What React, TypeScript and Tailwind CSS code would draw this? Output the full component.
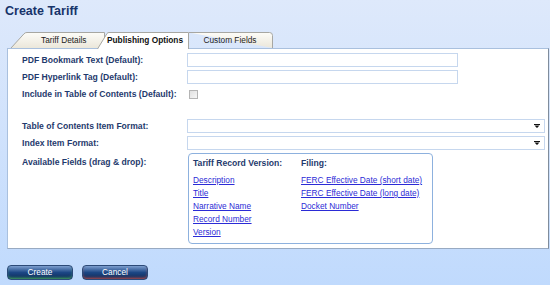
import React from "react";

const labelCls = "text-[8.6px] font-bold text-[#1f3a6d] leading-[14px] whitespace-nowrap";

function TextBox({ width }: { width: string }) {
  return <div className={`h-[14px] ${width} border border-[#c6d7ee] bg-white`} />;
}

function SelectBox() {
  return (
    <div className="h-[14px] w-[358px] border border-[#c6d7ee] bg-white flex items-center justify-end pr-[4px]">
      <svg width="6" height="4" viewBox="0 0 6 4">
        <path d="M0 0H6V1H0Z M0.5 1.5H5.5L3 4Z" fill="#111" />
      </svg>
    </div>
  );
}

function Tabs() {
  return (
    <div className="h-[16px] pl-[10px] flex items-start">
      <div className="relative w-[95px] h-[16px]">
        <svg className="absolute inset-0" width="95" height="16" viewBox="0 0 95 16">
          <defs>
            <linearGradient id="tg" x1="0" y1="0" x2="0" y2="1">
              <stop offset="0" stopColor="#fdfcf8" />
              <stop offset="1" stopColor="#ebe7da" />
            </linearGradient>
          </defs>
          <path d="M1 16 L14 1.8 Q15 0.5 17 0.5 L94.5 0.5 L94.5 16" fill="url(#tg)" stroke="#a7a7a2" />
        </svg>
        <span className="relative block pl-[31px] text-[8.3px] text-[#222] leading-[16px]">Tariff Details</span>
      </div>
      <div className="relative z-10 -ml-[8px] w-[92px] h-[17px]">
        <svg className="absolute inset-0" width="92" height="17" viewBox="0 0 92 17">
          <path d="M0.5 17 L10 1.5 Q10.7 0.5 12 0.5 L91.5 0.5 L91.5 17" fill="#fff" stroke="#a7a7a2" />
        </svg>
        <span className="relative block pl-[10px] text-[8.3px] font-bold text-[#111] leading-[16px] whitespace-nowrap">Publishing Options</span>
      </div>
      <div className="relative w-[84px] h-[16px]">
        <svg className="absolute inset-0" width="84" height="16" viewBox="0 0 84 16">
          <defs>
            <linearGradient id="tg2" x1="0" y1="0" x2="0" y2="1">
              <stop offset="0" stopColor="#fdfcf8" />
              <stop offset="1" stopColor="#ebe7da" />
            </linearGradient>
          </defs>
          <path d="M0 0.5 L80.5 0.5 Q83.5 0.5 83.5 3.5 L83.5 16" fill="url(#tg2)" stroke="#a7a7a2" />
        </svg>
        <span className="relative block text-center pr-[2px] text-[8.3px] text-[#222] leading-[16px]">Custom Fields</span>
      </div>
    </div>
  );
}

function FieldLink({ children }: { children: React.ReactNode }) {
  return <div className="h-[13px] leading-[13px] text-[8.3px] text-[#2b2bd6] underline whitespace-nowrap">{children}</div>;
}

export default function App() {
  return (
    <div className="w-[550px] h-[285px] flex flex-col bg-linear-to-b from-[#dee9fb] to-[#c0dafd] font-['Liberation_Sans',Arial,sans-serif]">
      <div className="h-[32px] pl-[5px] pt-[4px] text-[12.5px] font-bold text-[#17336a] leading-[14px]">Create Tariff</div>
      <Tabs />
      <div className="ml-[7px] w-[542px] h-[201px] bg-white border border-[#a9c0de] border-r-[#7f8c9c] border-b-[#98aac2] pl-[14px] pt-[4px]">
        <div className="grid grid-cols-[165px_1fr] gap-y-[3px]">
          <div className={labelCls}>PDF Bookmark Text (Default):</div>
          <TextBox width="w-[271px]" />
          <div className={labelCls}>PDF Hyperlink Tag (Default):</div>
          <TextBox width="w-[271px]" />
          <div className={labelCls}>Include in Table of Contents (Default):</div>
          <div className="h-[14px] flex items-center pl-[2px]">
            <div className="w-[9px] h-[9px] border border-[#b4b4b4] bg-linear-to-br from-[#e0e0e0] to-[#f6f6f6]" />
          </div>
          <div className="col-span-2 h-[12px]" />
          <div className={labelCls}>Table of Contents Item Format:</div>
          <SelectBox />
          <div className={labelCls}>Index Item Format:</div>
          <SelectBox />
          <div className={`${labelCls} pt-[2px]`}>Available Fields (drag &amp; drop):</div>
          <div className="ml-[1px] w-[245px] h-[91px] border border-[#8db1de] rounded-[4px] pl-[4px] pt-[2px] flex">
            <div className="w-[108px]">
              <div className="h-[14px] leading-[14px] text-[8.6px] font-bold text-[#1f3a6d]">Tariff Record Version:</div>
              <div className="mt-[4px]">
                <FieldLink>Description</FieldLink>
                <FieldLink>Title</FieldLink>
                <FieldLink>Narrative Name</FieldLink>
                <FieldLink>Record Number</FieldLink>
                <FieldLink>Version</FieldLink>
              </div>
            </div>
            <div>
              <div className="h-[14px] leading-[14px] text-[8.6px] font-bold text-[#1f3a6d]">Filing:</div>
              <div className="mt-[4px]">
                <FieldLink>FERC Effective Date (short date)</FieldLink>
                <FieldLink>FERC Effective Date (long date)</FieldLink>
                <FieldLink>Docket Number</FieldLink>
              </div>
            </div>
          </div>
        </div>
      </div>
      <div className="mt-[16px] pl-[7px] flex gap-[9px]">
        <button className="w-[66px] h-[15px] rounded-[4px] border border-[#2c4a78] bg-linear-to-b from-[#7d9fcf] via-[#1c4785] to-[#0d2a57] shadow-[inset_0_-2px_3px_-1px_#49b060] text-white text-[8.3px] leading-[13px]">Create</button>
        <button className="w-[66px] h-[15px] rounded-[4px] border border-[#2c4a78] bg-linear-to-b from-[#7d9fcf] via-[#1c4785] to-[#0d2a57] shadow-[inset_0_-2px_3px_-1px_#c0504d] text-white text-[8.3px] leading-[13px]">Cancel</button>
      </div>
    </div>
  );
}
